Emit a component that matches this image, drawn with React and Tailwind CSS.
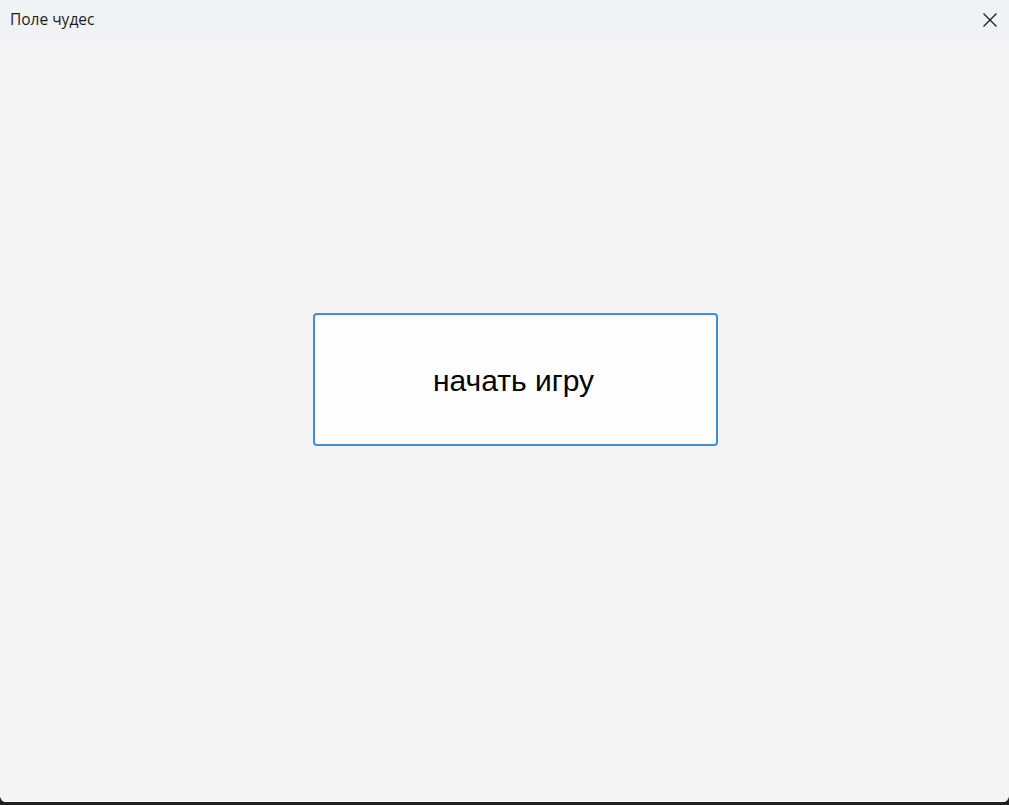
export default function App() {
  return (
    <div className="flex h-[805px] w-[1009px] flex-col overflow-hidden bg-[#202020]">
      <div className="flex flex-1 flex-col overflow-hidden rounded-b-[6px] bg-[#f4f4f4]">
        {/* Title bar */}
        <div className="flex h-[39px] shrink-0 items-center justify-between bg-[#eff3f6] pl-[10px] pr-[11px]">
          <span className="text-[15.5px] text-[#1a1a1a] [font-family:'Open_Sans',sans-serif]">Поле чудес</span>
          <svg className="h-[16px] w-[16px] text-[#1a1a1a]" viewBox="0 0 16 16" fill="none" stroke="currentColor" strokeWidth="1.3">
            <path d="M1.5 1.5l13 13M14.5 1.5l-13 13" />
          </svg>
        </div>

        {/* Content */}
        <div className="flex flex-1 items-start justify-center pt-[274px] pl-[22px]">
          <button className="flex h-[133px] w-[405px] items-center justify-center rounded-[4px] border-2 border-[#3b8fdb] bg-[#fdfdfd] pt-[2px] pr-[4px] text-[30px] text-black [font-family:'Liberation_Sans',sans-serif]">
            начать игру
          </button>
        </div>
        <div className="h-px shrink-0 bg-white" />
      </div>
      <div className="h-[3px] shrink-0" />
    </div>
  );
}
